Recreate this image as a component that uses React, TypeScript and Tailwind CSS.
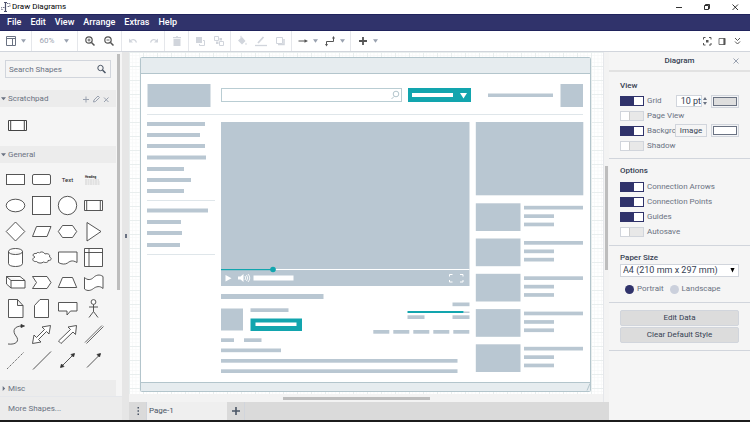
import { useState } from "react";
import type { ReactNode } from "react";

const menus = ["File", "Edit", "View", "Arrange", "Extras", "Help"];

type Bar = [x: number, y: number, width: number, height: number];

const navBars: Bar[] = [
  [7, 65, 58, 4],
  [7, 76, 53, 4],
  [7, 87, 58, 4],
  [7, 98.5, 59, 4],
  [7, 110, 37, 4],
  [7, 121, 44, 4],
  [7, 132, 37, 4],
  [7, 151.5, 61, 4],
  [7, 163, 34, 4],
  [7, 174, 35, 4],
  [7, 186, 33, 4],
];

const blocks: Bar[] = [
  [7.5, 27, 63, 23],
  [348, 36.5, 65, 3.5],
  [420.5, 27, 22.5, 23],
  [81, 65, 248.5, 164],
  [81, 237, 102.5, 5],
  [81, 251.5, 22, 22],
  [110.5, 251.3, 38, 3.7],
  [81, 281.3, 13, 3.7],
  [104, 281.3, 17.5, 3.7],
  [81, 291.5, 60, 3.7],
  [81, 302, 236.5, 3.7],
  [81, 312.3, 236.5, 3.7],
  [312.5, 245.5, 17, 3.7],
  [323.5, 254.5, 6, 1.5],
  [267.5, 258.3, 17, 3.7],
  [312.5, 258.3, 17, 3.7],
  [233.3, 273, 16, 3.7],
  [253.3, 273, 16, 3.7],
  [273.3, 273, 16, 3.7],
  [293.3, 273, 16, 3.7],
  [313.3, 273, 16, 3.7],
  [335.8, 65, 107.5, 73.3],
];

const thumbs = [146.3, 181.5, 216.8, 252.1, 287.3];

const shapes: { name: string; art: ReactNode }[] = [
  { name: "Rectangle", art: <rect x="3.5" y="7.5" width="18" height="10" /> },
  { name: "Rounded Rectangle", art: <rect x="3.5" y="7.5" width="18" height="10" rx="1.5" /> },
  {
    name: "Text",
    art: (
      <text x="12.5" y="15" textAnchor="middle" fontSize="6" fill="#222" stroke="none">
        Text
      </text>
    ),
  },
  {
    name: "Textbox",
    art: (
      <>
        <text x="4" y="10.5" fontSize="3" fontWeight="bold" fill="#222" stroke="none">
          Heading
        </text>
        <path d="M4 13h14M4 15h15M4 17h15" stroke="#ccc" strokeDasharray="2 .5" />
      </>
    ),
  },
  { name: "Ellipse", art: <ellipse cx="12.5" cy="12.5" rx="9.3" ry="6.3" /> },
  { name: "Square", art: <rect x="3.5" y="3.5" width="18" height="18" /> },
  { name: "Circle", art: <circle cx="12.5" cy="12.5" r="9.2" /> },
  { name: "Process", art: <path d="M3.5 7.5h18v10h-18zM5.7 7.5v10M19.3 7.5v10" /> },
  { name: "Diamond", art: <path d="M12.5 3l9.3 9.5-9.3 9.5-9.3-9.5z" /> },
  { name: "Parallelogram", art: <path d="M3.5 17.5l4-10h14.5l-4 10z" /> },
  { name: "Hexagon", art: <path d="M3.3 12.5l4.2-6h10l4.2 6-4.2 6h-10z" /> },
  { name: "Triangle", art: <path d="M6 3.5l14 9-14 9.5z" /> },
  {
    name: "Cylinder",
    art: <path d="M5.5 6.5v12c0 4 14 4 14 0v-12M5.5 6.5c0-4 14-4 14 0s-14 4-14 0" />,
  },
  {
    name: "Cloud",
    art: (
      <path d="M7.5 8.5C3.5 8 3 11 6 12c-4 2-2 5 1.5 4.5 1.5 2 5.5 2 7 .5 2 1 5 .5 4.5-1.5 4 0 4-2.5 1.5-3.5 1-2.5-2-4-4.500-3C14.5 6.500 11.5 6.500 10.5 8 9 7 7.5 7.5 7.5 8.5z" />
    ),
  },
  { name: "Document", art: <path d="M3.5 7h18.500v10.500c-5-3-7.500-1-9.500.5s-6 1.500-9-.5z" /> },
  { name: "Internal Storage", art: <path d="M3.5 3.5h18v18h-18zM3.5 7.5h18M8 3.5v18" /> },
  {
    name: "Cube",
    art: <path d="M3.5 6.5h13.5l5 4v7.5H8l-4.500-4zM3.5 6.5l4.500 4h14M8 10.5V18" />,
  },
  { name: "Step", art: <path d="M3.5 6.5H18l4 6-4 6H3.5l4-6z" /> },
  { name: "Trapezoid", art: <path d="M3.3 17.5l4.2-10h10l4.2 10z" /> },
  {
    name: "Tape",
    art: <path d="M3.5 7.5c3 3 6.500 2.500 9 0s6-3.500 9.500-1v12c-3-3-7-2-9.500 0s-6 3-9 .5z" />,
  },
  { name: "Note", art: <path d="M5.5 3.500h9l5.500 6v12H5.500zM14.5 3.500v6H20" /> },
  { name: "Card", art: <path d="M11 3.500h8.500v18h-14v-12z" /> },
  { name: "Callout", art: <path d="M3.5 6.500H22V15h-6.500L12 19v-4H3.500z" /> },
  {
    name: "Actor",
    art: (
      <>
        <circle cx="12.5" cy="6" r="2.4" />
        <path d="M12.5 8.500v7M8 11h9M12.5 15.500l-4.500 6M12.5 15.500l4.500 6" />
      </>
    ),
  },
  {
    name: "Curve",
    art: (
      <>
        <path d="M5 22c8 1 12-3 8-8s-2-10 6-10" fill="none" />
        <path d="M18 2.500L21.500 4 18 5.500z" fill="#222" />
      </>
    ),
  },
  {
    name: "Bidirectional Arrow",
    art: (
      <path d="M21.5 3.500L13 5l2.500 2.500-8 8L5 13l-1.500 8.500L12 20l-2.500-2.500 8-8L20 12z" />
    ),
  },
  {
    name: "Arrow",
    art: <path d="M21.5 3.500L13 5l2.500 2.500-12 11.500L6 21.500 18 10l2.500 2.500z" />,
  },
  { name: "Link", art: <path d="M4 20.500l17-17M5.500 21.500l17-17" strokeWidth=".8" /> },
  { name: "Dotted Line", art: <path d="M4 21L21 4" strokeDasharray="1.2 1" /> },
  { name: "Line", art: <path d="M4 21.500l18-18" /> },
  {
    name: "Bidirectional Connector",
    art: (
      <>
        <path d="M6 19L19 6" />
        <path d="M5.500 19.500l1-3.500L9 18.500zM19.500 5.500l-3.500 1L18.500 9z" fill="#222" />
      </>
    ),
  },
  {
    name: "Directional Connector",
    art: (
      <>
        <path d="M6 19.500l13-13" />
        <path d="M19.500 5.500l-3.500 1L18.500 9z" fill="#222" />
      </>
    ),
  },
];

const Icon = ({ children, className = "" }: { children: ReactNode; className?: string }) => (
  <svg
    viewBox="0 0 12 12"
    className={`w-3 h-3 shrink-0 ${className}`}
    fill="none"
    stroke="currentColor"
    aria-hidden="true"
  >
    {children}
  </svg>
);

const Caret = () => (
  <svg viewBox="0 0 6 4" className="w-[5px] h-1 shrink-0 text-gray-400" aria-hidden="true">
    <path d="M0 0h6L3 4z" fill="currentColor" />
  </svg>
);

const TitleBar = () => (
  <header className="flex h-3.5 shrink-0 items-center justify-between bg-white pr-[9px] text-black">
    <div className="flex items-center">
      <Icon className="text-[#4b4f6b]">
        <path d="M5.5 1.5v9M4 1.5h3M4 10.5h3" strokeWidth="1.2" />
        <path d="M7 2.5h3v3H7.500M4.500 6.500h-3v2h2" strokeDasharray="1.5 .8" strokeWidth=".8" />
      </Icon>
      <h1 className="text-[8px]">Draw Diagrams</h1>
    </div>
    <div className="flex items-center gap-4">
      <button aria-label="Minimize">
        <Icon>
          <path d="M3 6.500h6" strokeWidth=".8" />
        </Icon>
      </button>
      <button aria-label="Restore">
        <Icon>
          <path d="M3.500 4.500h4v4h-4zM4.500 4.500v-1h4v4h-1" strokeWidth=".8" />
        </Icon>
      </button>
      <button aria-label="Close window">
        <Icon>
          <path d="M3.500 3.500L9 9M9 3.500L3.500 9" strokeWidth=".8" />
        </Icon>
      </button>
    </div>
  </header>
);

const MenuBar = () => (
  <nav className="flex h-[17px] shrink-0 items-center gap-[9px] border-y border-[#20235c] bg-[#30336b] px-[7px] text-[9px] font-medium text-white">
    {menus.map((menu) => (
      <button key={menu}>{menu}</button>
    ))}
  </nav>
);

const group = "flex h-full items-center justify-around border-r border-gray-200";

const Toolbar = () => (
  <div className="flex h-[21px] shrink-0 items-center border-b border-gray-300 bg-white text-[#555]">
    <div className={`${group} w-8`}>
      <button aria-label="View" className="flex items-center gap-1 text-gray-500">
        <Icon>
          <path d="M1.500 1.500h9v9h-9zM1.500 3.500h9M7.500 3.500v7" />
        </Icon>
        <Caret />
      </button>
    </div>
    <div className={`${group} w-[46px]`}>
      <button aria-label="Zoom" className="flex items-center gap-2.5 text-[8px] text-gray-400">
        60%
        <Caret />
      </button>
    </div>
    <div className={`${group} w-11 px-0.5`}>
      <button aria-label="Zoom In">
        <Icon>
          <circle cx="5" cy="5" r="3.2" strokeWidth="1.2" />
          <path d="M7.500 7.500l3 3" strokeWidth="1.5" />
          <path d="M3.500 5h3M5 3.500v3" strokeWidth=".9" />
        </Icon>
      </button>
      <button aria-label="Zoom Out">
        <Icon>
          <circle cx="5" cy="5" r="3.2" strokeWidth="1.2" />
          <path d="M7.500 7.500l3 3" strokeWidth="1.5" />
          <path d="M3.500 5h3" strokeWidth=".9" />
        </Icon>
      </button>
    </div>
    <div className={`${group} w-[43px] text-gray-300`}>
      <button aria-label="Undo">
        <Icon>
          <path d="M3 6c2.500-2.500 5.500-1.500 6.500 1.500" strokeWidth="1.3" />
          <path d="M2 3.500v4h4z" fill="currentColor" stroke="none" />
        </Icon>
      </button>
      <button aria-label="Redo">
        <Icon>
          <path d="M9 6C6.500 3.500 3.500 4.500 2.500 7.500" strokeWidth="1.3" />
          <path d="M10 3.500v4H6z" fill="currentColor" stroke="none" />
        </Icon>
      </button>
    </div>
    <div className={`${group} w-6 text-gray-300`}>
      <button aria-label="Delete">
        <Icon>
          <path d="M2.500 4h7v7h-7zM2 2h8v1.300H2zM5 1.200h2V2H5z" fill="currentColor" stroke="none" />
        </Icon>
      </button>
    </div>
    <div className={`${group} w-[42px] px-0.5 text-gray-300`}>
      <button aria-label="To Front">
        <Icon>
          <path d="M2 2h6v6H2z" fill="currentColor" stroke="none" />
          <path d="M9 5.500h1.500v5h-5V9" />
        </Icon>
      </button>
      <button aria-label="To Back">
        <Icon>
          <path d="M6.500 6.500h4v4h-4z" />
          <path d="M1.500 1.500h4v4h-4z" />
          <path d="M6.500 3H9v2.500H6.500zM3 6.500h2.500V9H3z" fill="currentColor" stroke="none" />
        </Icon>
      </button>
    </div>
    <div className={`${group} w-[61px] px-0.5 text-gray-300`}>
      <button aria-label="Fill Color">
        <Icon>
          <path d="M2 5.500L6 2l3.500 4L6 9.500zM10 7.500l1 2H9z" fill="currentColor" stroke="none" />
          <path d="M5 .8v3" />
        </Icon>
      </button>
      <button aria-label="Line Color">
        <Icon>
          <path d="M0 10.500h12" strokeWidth="1.3" />
          <path d="M3 8l5.500-6" strokeWidth="1.8" />
        </Icon>
      </button>
      <button aria-label="Shadow">
        <Icon>
          <path d="M2.500 2.500h6v6h-6z" />
          <path d="M4 9.500h6V4" strokeWidth="1.5" />
        </Icon>
      </button>
    </div>
    <div className={`${group} w-[59px] px-0.5`}>
      <button aria-label="Connection" className="flex items-center gap-1">
        <Icon>
          <path d="M1.500 6h7" />
          <path d="M7.500 4.300L11 6 7.500 7.700z" fill="currentColor" stroke="none" />
        </Icon>
        <Caret />
      </button>
      <button aria-label="Waypoints" className="flex items-center gap-1">
        <Icon>
          <path d="M2.500 10V6.500h7V3" />
          <path d="M1 9h3l-1.500 2.500zM8 3.500h3L9.500 1z" fill="currentColor" stroke="none" />
        </Icon>
        <Caret />
      </button>
    </div>
    <button aria-label="Insert" className="ml-1.5 flex items-center gap-1">
      <Icon>
        <path d="M6 2v8M2 6h8" strokeWidth="1.8" />
      </Icon>
      <Caret />
    </button>
    <div className="ml-auto flex items-center gap-[3px] pr-[7px]">
      <button aria-label="Fullscreen">
        <Icon>
          <path d="M2.500 4.500v-2h2M8 2.500h2v2M10 8v2H8M4.500 10h-2V8" />
          <path d="M5 5h2.500v2.500H5z" fill="currentColor" stroke="none" />
        </Icon>
      </button>
      <button aria-label="Format">
        <Icon>
          <path d="M3 3.500h6v6H3z" strokeWidth=".8" />
          <path d="M8.300 3v7" strokeWidth="1.8" />
        </Icon>
      </button>
      <button aria-label="Collapse">
        <Icon>
          <path d="M4 3l2.500 2.500L9 3M4 6.500L6.500 9 9 6.500" />
        </Icon>
      </button>
    </div>
  </div>
);

const SectionTitle = ({ children, open = true }: { children: ReactNode; open?: boolean }) => (
  <button className="flex flex-1 items-center gap-[2px]" aria-expanded={open}>
    <svg viewBox="0 0 6 6" className="h-[5px] w-[5px] text-gray-500" aria-hidden="true">
      <path d={open ? "M0 1.5h6L3 5z" : "M2 0l3 3-3 3z"} fill="currentColor" />
    </svg>
    {children}
  </button>
);

const sectionBar = "flex h-[17px] shrink-0 items-center bg-[#ececec] pl-px";

const Sidebar = () => (
  <aside className="flex w-[122px] shrink-0 flex-col bg-[#f5f5f5] text-[8px] text-gray-500">
    <div className="flex min-h-0 flex-1 pr-0.5">
      <div className="flex min-w-0 flex-1 flex-col overflow-hidden">
        <label className="mx-[5px] mt-2 mb-3 flex h-[18px] shrink-0 items-center border border-gray-300 px-[3px]">
          <input
            aria-label="Search Shapes"
            placeholder="Search Shapes"
            className="w-full min-w-0 bg-transparent outline-none placeholder:text-gray-500"
          />
          <Icon className="text-gray-600">
            <circle cx="5.5" cy="5" r="2.7" />
            <path d="M7.500 7l3 3" strokeWidth="1.5" />
          </Icon>
        </label>
        <div className={`${sectionBar} pr-1`}>
          <SectionTitle>Scratchpad</SectionTitle>
          <div className="flex items-center text-gray-400">
            <button aria-label="Add">
              <Icon className="-mr-0.5">
                <path d="M6 3.500v6M3 6.500h6" />
              </Icon>
            </button>
            <button aria-label="Edit">
              <Icon className="-mr-0.5">
                <path d="M3.500 9L4 7l4-4 1.500 1.500-4 4z" />
              </Icon>
            </button>
            <button aria-label="Close scratchpad">
              <Icon>
                <path d="M4 4.500L8.500 9M8.500 4.500L4 9" />
              </Icon>
            </button>
          </div>
        </div>
        <div className="flex h-[39px] shrink-0 items-center px-[5px] pb-0.5">
          <button aria-label="Saved process">
            <svg
              viewBox="0 0 25 25"
              className="h-[25px] w-[25px]"
              fill="#fff"
              stroke="#444"
              aria-hidden="true"
            >
              <path d="M3.500 7.500h18v10h-18zM5.700 7.500v10M19.300 7.500v10" />
            </svg>
          </button>
        </div>
        <div className={sectionBar}>
          <SectionTitle>General</SectionTitle>
        </div>
        <div className="mt-1 mb-[7px] ml-[3px] grid h-[206px] w-[103px] shrink-0 grid-cols-4 grid-rows-8 place-items-center">
          {shapes.map(({ name, art }) => (
            <button key={name} aria-label={name}>
              <svg
                viewBox="0 0 25 25"
                className="h-[25px] w-[25px]"
                fill="#fff"
                stroke="#444"
                strokeWidth=".9"
                aria-hidden="true"
              >
                {art}
              </svg>
            </button>
          ))}
        </div>
        <div className={sectionBar}>
          <SectionTitle open={false}>Misc</SectionTitle>
        </div>
      </div>
      <div className="w-1 pt-0.5 pl-px">
        <div className="h-[236px] w-[3px] bg-[#bdbdbd]" />
      </div>
    </div>
    <button className="h-6 shrink-0 border-t border-gray-200 bg-[#ececec] px-2 text-left">
      More Shapes...
    </button>
  </aside>
);

const Drawing = () => (
  <g fill="#b9c7d2">
    <rect x=".5" y=".5" width="450" height="334" rx="1" fill="#fff" stroke="#b3c5cc" />
    <path d="M1 1h449v15.500H1zM1 325.500h449v8.500H1z" fill="#e6ecef" />
    <path d="M1 16.500h449M1 325.500h449M447 333.500l3-7" stroke="#b3c5cc" />
    {[...navBars, ...blocks].map(([x, y, width, height]) => (
      <rect key={`${x}-${y}`} x={x} y={y} width={width} height={height} />
    ))}
    <path d="M7 57.500h436M7 143.500h68M7 197.500h68" stroke="#dfe6ea" />
    <rect x="81.5" y="31.5" width="180" height="13" fill="#fff" stroke="#b9cdd3" />
    <g fill="none" stroke="#b3c5cc">
      <circle cx="256" cy="37" r="2.8" />
      <path d="M254 39.500l-2.500 2.500" />
    </g>
    <g fill="#12a5ae">
      <rect x="268" y="31" width="63" height="14" />
      <rect x="110.5" y="261.5" width="51.5" height="12.5" />
      <rect x="267.5" y="254" width="56" height="2" />
      <rect x="81" y="212" width="52" height="1.2" />
    </g>
    <g fill="#fff">
      <rect x="272" y="36" width="41" height="4" />
      <path d="M320 36h7l-3.500 5.500z" />
      <rect x="115.5" y="265.5" width="41" height="3.5" />
      <rect x="133" y="212" width="196.5" height="1" />
      <path d="M85.500 218v6.500l6-3.250z" />
      <path d="M98 219.500h2.500l3-2.500v8l-3-2.500H98z" />
      <rect x="113.5" y="218.5" width="40" height="5" />
    </g>
    <path
      d="M105 219q1.500 2 0 4M106.500 218q2.500 3 0 6M108 217q3.500 4 0 8"
      fill="none"
      stroke="#fff"
      strokeWidth=".9"
    />
    <path
      d="M309.500 219.500v-2h3M320 217.500h3v2M323 223v2h-3M312.500 225h-3v-2"
      fill="none"
      stroke="#fff"
    />
    <circle cx="133" cy="212.5" r="2.8" fill="#12a5ae" />
    {thumbs.map((y) => (
      <g key={y}>
        <rect x="335.8" y={y} width="44.7" height="27.7" />
        <rect x="384" y={y + 2.5} width="59" height="3.7" />
        <rect x="384" y={y + 11} width="30" height="3.7" />
        <rect x="384" y={y + 19.3} width="30" height="3.7" />
      </g>
    ))}
  </g>
);

const Canvas = () => (
  <main className="flex min-w-0 flex-1 flex-col">
    <div className="flex min-h-0 flex-1 bg-[#f3f3f3]">
      <div className="flex min-w-0 flex-1 flex-col">
        <svg className="min-h-0 w-full flex-1" role="img" aria-label="Video page wireframe">
          <defs>
            <pattern id="grid" width="14" height="14" patternUnits="userSpaceOnUse">
              <rect width="14" height="14" fill="#fff" />
              <path
                d="M3.500 0v14M7 0v14M10.500 0v14M0 3.500h14M0 7h14M0 10.500h14"
                stroke="#f6f8f8"
                strokeWidth=".7"
              />
              <path d="M0 .5h14M.5 0v14" stroke="#e9eeee" />
            </pattern>
          </defs>
          <rect width="100%" height="100%" fill="url(#grid)" />
          <g transform="translate(11 5)">
            <Drawing />
          </g>
        </svg>
        <div className="flex h-2 shrink-0 items-center bg-[#f3f3f3] pl-[154px]">
          <div className="h-[3px] w-[46%] bg-[#bdbdbd]" />
        </div>
      </div>
      <div className="flex w-1.5 shrink-0 flex-col items-center border-l border-gray-200 pt-[114px]">
        <div className="h-[104px] w-[3px] bg-[#bdbdbd]" />
      </div>
    </div>
    <div className="flex h-[18px] shrink-0 items-stretch bg-[#dadada] text-[8px] text-gray-600">
      <button
        aria-label="Pages"
        className="flex w-[18px] items-center justify-center border-r border-gray-300"
      >
        <Icon>
          <path
            d="M5.500 2H7v1.500H5.500zM5.500 5.200H7v1.500H5.500zM5.500 8.400H7v1.500H5.500z"
            fill="currentColor"
            stroke="none"
          />
        </Icon>
      </button>
      <button className="w-20 bg-[#efefef] px-0.5 text-left">Page-1</button>
      <button
        aria-label="Insert Page"
        className="flex w-[18px] items-center justify-center border-r border-gray-300"
      >
        <Icon>
          <path d="M6 2v8M2 6h8" strokeWidth="1.6" />
        </Icon>
      </button>
    </div>
  </main>
);

const Toggle = ({ label, on = false }: { label: string; on?: boolean }) => {
  const [checked, setChecked] = useState(on);
  return (
    <label className="flex min-w-0 items-center gap-[3px] whitespace-nowrap">
      <input
        type="checkbox"
        checked={checked}
        onChange={() => setChecked(!checked)}
        className="h-2.5 w-6 shrink-0 appearance-none border border-gray-300 bg-[linear-gradient(to_right,#fff_8px,#ccc_8px,#ccc_9px,#e8e8e8_9px)] checked:border-[#30336b] checked:bg-[linear-gradient(to_right,#30336b_13px,#fff_13px)]"
      />
      {label}
    </label>
  );
};

const Swatch = ({ label, className }: { label: string; className: string }) => (
  <button
    aria-label={label}
    className="h-[13px] w-7 shrink-0 border border-gray-300 bg-gray-100 p-px"
  >
    <span className={`block h-full border border-gray-500 ${className}`} />
  </button>
);

const heading = "text-[8px] font-medium leading-3 text-gray-700";

const FormatPanel = () => {
  const [spacing, setSpacing] = useState("10 pt");
  return (
    <aside className="w-[141px] shrink-0 overflow-hidden bg-[#f5f5f5] text-[8px] text-gray-500">
      <div className="flex h-5 items-center border-b-2 border-[#e2e2e2] pr-2">
        <h2 className="flex-1 pl-5 text-center font-medium text-gray-700">Diagram</h2>
        <button aria-label="Close format panel" className="text-gray-400">
          <Icon>
            <path d="M3.500 3.500l5 5M8.500 3.500l-5 5" />
          </Icon>
        </button>
      </div>
      <section className="border-b border-gray-300 px-[11px] pt-2 pb-[5px]">
        <h3 className={heading}>View</h3>
        <div className="mt-0.5 grid h-[59px] grid-rows-4">
          <div className="flex items-center">
            <Toggle label="Grid" on />
            <input
              aria-label="Grid size"
              value={spacing}
              onChange={(e) => setSpacing(e.target.value)}
              className="ml-auto h-3 w-[26px] border border-gray-300 bg-white text-right text-[9px] text-gray-700"
            />
            <button aria-label="Change grid size" className="mr-[3px] text-gray-500">
              <svg viewBox="0 0 6 12" className="h-3 w-1.5" aria-hidden="true">
                <path d="M1 5l2-3 2 3zM1 7l2 3 2-3z" fill="currentColor" />
              </svg>
            </button>
            <Swatch label="Grid color" className="bg-[#dedede]" />
          </div>
          <Toggle label="Page View" />
          <div className="flex items-center">
            <div className="flex w-[55px] overflow-hidden">
              <Toggle label="Background" on />
            </div>
            <button className="mr-1 h-[13px] flex-1 border border-gray-300 text-gray-700">
              Image
            </button>
            <Swatch label="Background color" className="bg-white" />
          </div>
          <Toggle label="Shadow" />
        </div>
      </section>
      <section className="border-b border-gray-300 px-[11px] pt-1.5 pb-1.5">
        <h3 className={heading}>Options</h3>
        <div className="mt-[3px] grid h-[59px] grid-rows-4">
          <Toggle label="Connection Arrows" on />
          <Toggle label="Connection Points" on />
          <Toggle label="Guides" on />
          <Toggle label="Autosave" />
        </div>
      </section>
      <section className="border-b border-gray-300 px-[11px] pt-1.5 pb-[7px]">
        <h3 className={heading}>
          <label htmlFor="paper">Paper Size</label>
        </h3>
        <div className="relative">
          <select
            id="paper"
            className="block h-[13px] w-full appearance-none border border-gray-300 bg-white pl-0.5 text-[9px] leading-none text-gray-700"
          >
            <option>A4 (210 mm x 297 mm)</option>
          </select>
          <svg
            viewBox="0 0 6 6"
            className="pointer-events-none absolute top-1 right-1 h-[5px] w-[5px]"
            aria-hidden="true"
          >
            <path d="M.5 0h5L3 5.500z" fill="#000" />
          </svg>
        </div>
        <div className="mt-[6px] flex gap-1.5 pl-[5px]">
          {["Portrait", "Landscape"].map((name) => (
            <label key={name} className="flex h-3 items-center gap-[3px]">
              <input
                type="radio"
                name="orientation"
                defaultChecked={name === "Portrait"}
                className="h-[9px] w-[9px] appearance-none rounded-full bg-[#cbd0dc] checked:bg-[#30336b]"
              />
              {name}
            </label>
          ))}
        </div>
      </section>
      <section className="flex flex-col gap-px border-b border-gray-300 px-[11px] pt-[7px] pb-[7px] text-gray-700">
        <button className="h-4 rounded-xs border border-gray-300 bg-[#dcdcdc]">Edit Data</button>
        <button className="h-4 rounded-xs border border-gray-300 bg-[#dcdcdc]">
          Clear Default Style
        </button>
      </section>
    </aside>
  );
};

const App = () => {
  return (
    <div className="flex h-screen flex-col overflow-hidden border-b-2 border-[#1c1c1c] bg-white font-['Roboto','Liberation_Sans',sans-serif] leading-none">
      <TitleBar />
      <MenuBar />
      <Toolbar />
      <div className="flex min-h-0 flex-1">
        <Sidebar />
        <div className="flex w-[7px] shrink-0 items-center justify-center bg-[#e6e6e6]">
          <div className="h-1 w-0.5 bg-gray-500" />
        </div>
        <Canvas />
        <FormatPanel />
      </div>
    </div>
  );
};

export default App;
